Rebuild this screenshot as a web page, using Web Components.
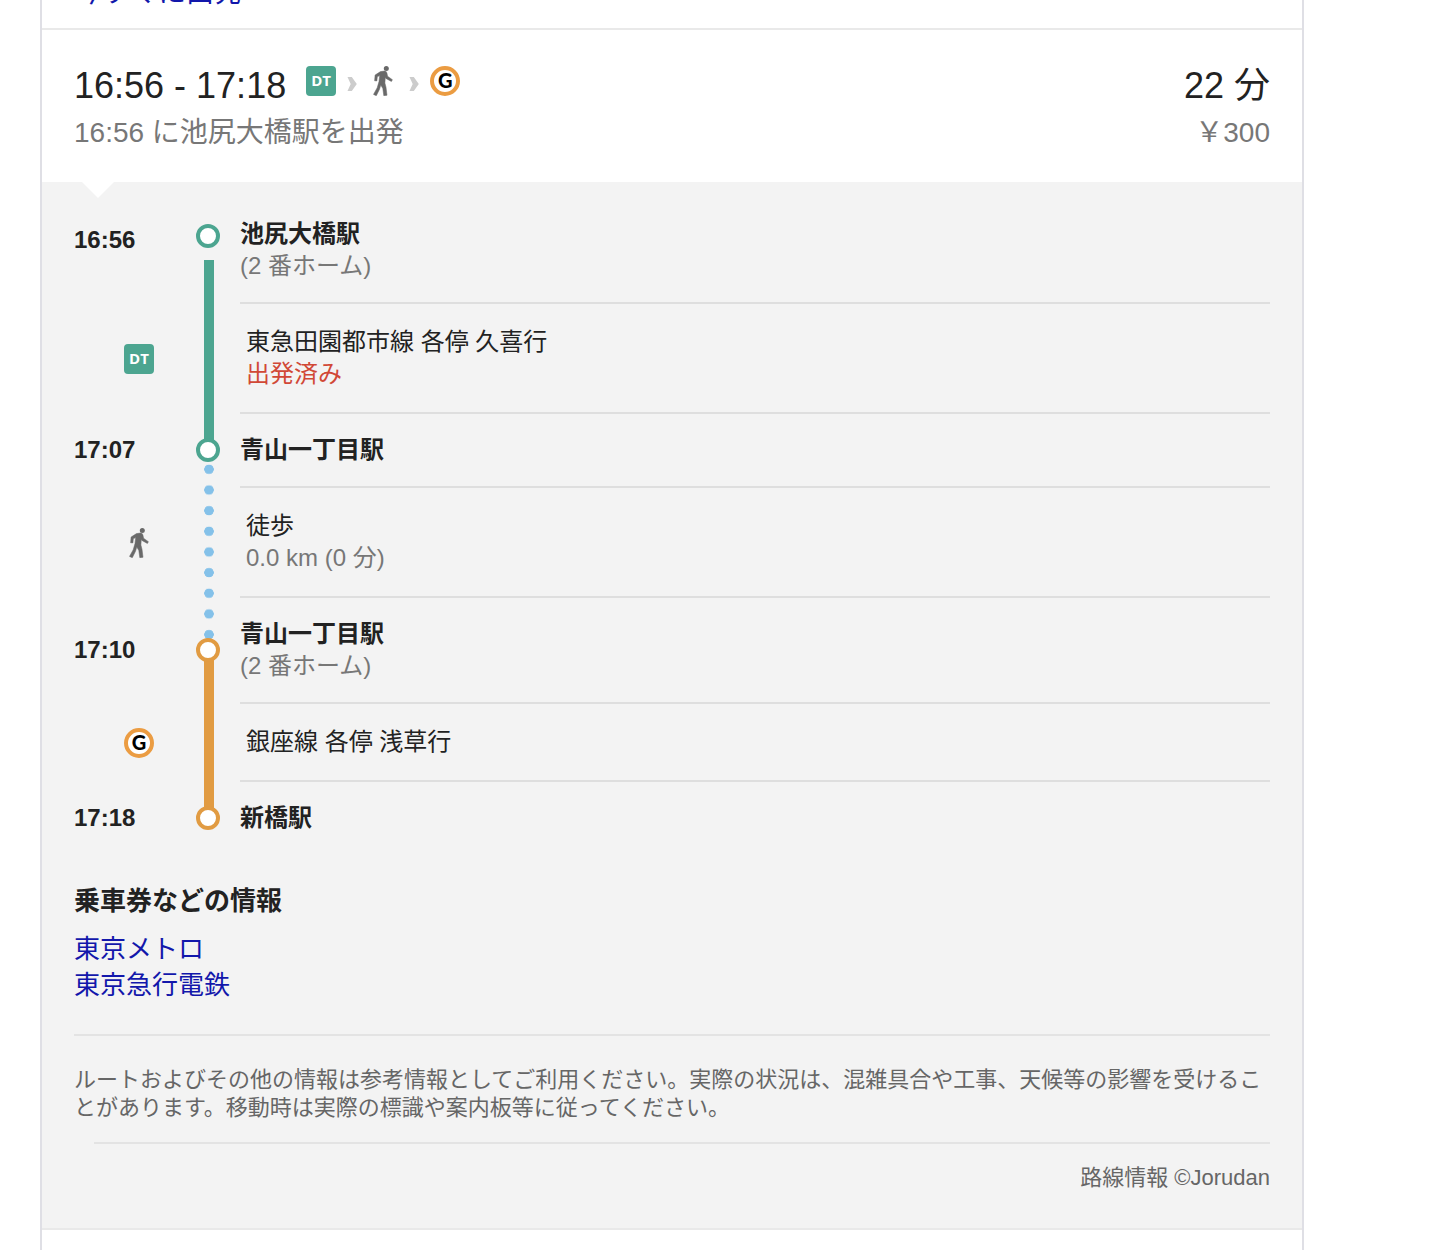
<!DOCTYPE html>
<html lang="ja">
<head>
<meta charset="utf-8">
<meta name="viewport" content="width=device-width, initial-scale=1">
<title>乗換案内</title>
<style>
  body {
    margin: 0;
    background: #fff;
    color: #222;
    font-family: "Liberation Sans", "Noto Sans CJK JP", sans-serif;
  }
</style>
</head>
<body>
<route-card>
  <depart-now slot="previous" href="#now">今すぐに出発</depart-now>
  <route-summary slot="summary" time="16:56 - 17:18" duration="22 分" departure="16:56 に池尻大橋駅を出発" fare="&#65509;300">
    <line-icon kind="dt"></line-icon>
    <step-arrow></step-arrow>
    <line-icon kind="walk"></line-icon>
    <step-arrow></step-arrow>
    <line-icon kind="g"></line-icon>
  </route-summary>
  <route-stop first time="16:56" name="池尻大橋駅" platform="(2 番ホーム)" color="#4ca590"></route-stop>
  <route-leg kind="dt" name="東急田園都市線 各停 久喜行" alert="出発済み" color="#4ca590" up="44" down="36"></route-leg>
  <route-stop time="17:07" name="青山一丁目駅" color="#4ca590"></route-stop>
  <route-leg kind="walk" name="徒歩" detail="0.0 km (0 分)" dotted up="29" down="47"></route-leg>
  <route-stop time="17:10" name="青山一丁目駅" platform="(2 番ホーム)" color="#e19b42"></route-stop>
  <route-leg kind="g" name="銀座線 各停 浅草行" color="#e19b42" up="54" down="36"></route-leg>
  <route-stop last time="17:18" name="新橋駅" color="#e19b42"></route-stop>
  <ticket-info heading="乗車券などの情報">
    <a href="#metro">東京メトロ</a>
    <a href="#tokyu">東京急行電鉄</a>
  </ticket-info>
  <route-notice credit="路線情報 ©Jorudan">ルートおよびその他の情報は参考情報としてご利用ください。実際の状況は、混雑具合や工事、天候等の影響を受けることがあります。移動時は実際の標識や案内板等に従ってください。</route-notice>
</route-card>

<script>
const render = (el, html) => { el.attachShadow({ mode: "open" }).innerHTML = html; };
const attr = (el, name) => el.getAttribute(name) || "";

customElements.define("route-card", class extends HTMLElement {
  connectedCallback() {
    render(this, `
      <style>
        :host {
          display: flex; flex-direction: column; box-sizing: border-box;
          min-height: 100vh; margin: 0 134px 0 40px;
          border: solid #dfdfe5; border-width: 0 2px;
        }
        .panel {
          position: relative; padding: 16px 32px 36px;
          background: #f3f3f3; border-bottom: 2px solid #e9e9e9;
        }
        .notch {
          position: absolute; top: 0; left: 40px; width: 32px; height: 16px;
          background: #fff; clip-path: polygon(0 0, 100% 0, 50% 100%);
        }
      </style>
      <slot name="previous"></slot>
      <slot name="summary"></slot>
      <section class="panel"><span class="notch"></span><slot></slot></section>`);
  }
});

customElements.define("depart-now", class extends HTMLElement {
  connectedCallback() {
    render(this, `
      <style>
        :host {
          display: flex; align-items: flex-end; height: 28px; padding: 0 32px;
          overflow: hidden; border-bottom: 2px solid #e9e9e9;
        }
        a { color: #1217ab; font-size: 28px; line-height: 36px; text-decoration: none; padding-bottom: 17px; }
      </style>
      <a href="${attr(this, "href")}"><slot></slot></a>`);
  }
});

customElements.define("route-summary", class extends HTMLElement {
  connectedCallback() {
    render(this, `
      <style>
        :host { display: flex; flex-direction: column; gap: 7px; padding: 34px 32px 31px; }
        .row { display: flex; justify-content: space-between; }
        .main { font-size: 36px; line-height: 44px; }
        .sub { font-size: 28px; line-height: 36px; color: #777; }
        .trip { display: flex; gap: 20px; }
        .icons { display: flex; align-items: flex-start; padding-top: 2px; }
      </style>
      <div class="row main">
        <div class="trip"><span>${attr(this, "time")}</span><span class="icons"><slot></slot></span></div>
        <span>${attr(this, "duration")}</span>
      </div>
      <div class="row sub"><span>${attr(this, "departure")}</span><span>${attr(this, "fare")}</span></div>`);
  }
});

customElements.define("step-arrow", class extends HTMLElement {
  connectedCallback() {
    render(this, `
      <style>:host { display: block; width: 32px; height: 30px; } svg { display: block; }</style>
      <svg width="32" height="30" viewBox="0 0 32 30" aria-hidden="true">
        <path d="M11.500 11h4.300l5 7-5 7h-4.300l3.200-7z" fill="#ccc"/>
      </svg>`);
  }
});

customElements.define("line-icon", class extends HTMLElement {
  connectedCallback() {
    const art = {
      dt: `<span class="badge dt">DT</span>`,
      g: `<span class="badge g">G</span>`,
      walk: `<svg width="30" height="30" viewBox="0 0 30 30" role="img" aria-label="徒歩">
        <circle cx="18.300" cy="2.500" r="2.500" fill="#696969"/>
        <path d="M12.500 5.600 16.500 5Q18.600 5.200 18.900 7L19.600 10.300 24.400 13.700 23.400 15.500 17.900 12.400 17.300 11.200 16.900 17 18 21.200 19 29.300 15.800 29.700 14.800 22.500 12.800 19 11.500 23.300 8.300 29.700 5.500 28.400 9.200 21.800 11 15.500 11.700 9.600 9.300 10.800 8.900 14.900 6.600 14.800 7.100 9Z" fill="#696969" stroke="#696969" stroke-width="0.500"/>
      </svg>`
    };
    render(this, `
      <style>
        :host { display: block; width: 30px; height: 30px; }
        svg { display: block; }
        .badge {
          display: flex; align-items: center; justify-content: center;
          box-sizing: border-box; width: 30px; height: 30px;
        }
        .dt { background: #4ca590; color: #fff; border-radius: 4px; padding-bottom: 2px; font: bold 15px/18px "Open Sans", sans-serif; }
        .g { background: #fff; color: #000; border: 4px solid #eb9c42; border-radius: 50%; padding-bottom: 2px; font: 900 20px/20px Lato, sans-serif; }
      </style>${art[attr(this, "kind")]}`);
  }
});

const rowStyle = `
  :host { display: grid; grid-template-columns: 122px 24px 1fr; }
  .body {
    margin-left: 20px; font-size: 24px; line-height: 32px;
    border-bottom: 2px solid #dedede;
  }
  .muted { color: #777; }
`;

customElements.define("route-stop", class extends HTMLElement {
  connectedCallback() {
    const platform = attr(this, "platform");
    render(this, `
      <style>
        ${rowStyle}
        .body { padding: 20px 0; }
        .name, time { font-weight: bold; }
        time, .ring { align-self: center; margin-bottom: 2px; }
        time { font-size: 24px; line-height: 32px; }
        .ring {
          position: relative; z-index: 1; box-sizing: border-box; width: 24px; height: 24px;
          border: 4px solid ${attr(this, "color")}; border-radius: 50%; background: #fff;
        }
        :host([first]) time, :host([first]) .ring { align-self: start; margin-top: 26px; }
        :host([last]) .body { border-bottom: 0; }
        :host([last]) time, :host([last]) .ring { margin-bottom: 0; }
      </style>
      <time>${attr(this, "time")}</time>
      <span class="ring"></span>
      <div class="body">
        <div class="name">${attr(this, "name")}</div>
        ${platform && `<div class="muted">${platform}</div>`}
      </div>`);
  }
});

customElements.define("route-leg", class extends HTMLElement {
  connectedCallback() {
    const detail = attr(this, "detail"), alert = attr(this, "alert");
    render(this, `
      <style>
        ${rowStyle}
        .body { padding: 22px 6px; }
        .alert { color: #d14836; }
        line-icon { align-self: center; margin-left: 50px; }
        .rail {
          width: 10px; background: ${attr(this, "color") || "none"};
          margin: -${attr(this, "up")}px 0 -${attr(this, "down")}px 8px;
        }
        :host([dotted]) .rail {
          background: radial-gradient(circle 5px, #84c1e9 90%, #84c1e900 100%) 0 0 / 10px 21px repeat round;
        }
      </style>
      <line-icon kind="${attr(this, "kind")}"></line-icon>
      <span class="rail"></span>
      <div class="body">
        <div>${attr(this, "name")}</div>
        ${alert && `<div class="alert">${alert}</div>`}
        ${detail && `<div class="muted">${detail}</div>`}
      </div>`);
  }
});

customElements.define("ticket-info", class extends HTMLElement {
  connectedCallback() {
    render(this, `
      <style>
        :host { display: block; margin-top: 29px; padding-bottom: 31px; border-bottom: 2px solid #e3e3e3; font-size: 26px; line-height: 36px; }
        h2 { margin: 0 0 12px; font-size: 26px; line-height: 36px; }
        .links { display: flex; flex-direction: column; align-items: flex-start; }
        ::slotted(a) { color: #1217ab; text-decoration: none; }
      </style>
      <h2>${attr(this, "heading")}</h2>
      <div class="links"><slot></slot></div>`);
  }
});

customElements.define("route-notice", class extends HTMLElement {
  connectedCallback() {
    render(this, `
      <style>
        :host { display: block; color: #666; font-size: 22px; line-height: 28px; }
        p { margin: 30px 0 20px; }
        footer { margin-left: 20px; padding-top: 20px; border-top: 2px solid #e3e3e3; text-align: right; }
      </style>
      <p><slot></slot></p>
      <footer>${attr(this, "credit")}</footer>`);
  }
});
</script>
</body>
</html>
